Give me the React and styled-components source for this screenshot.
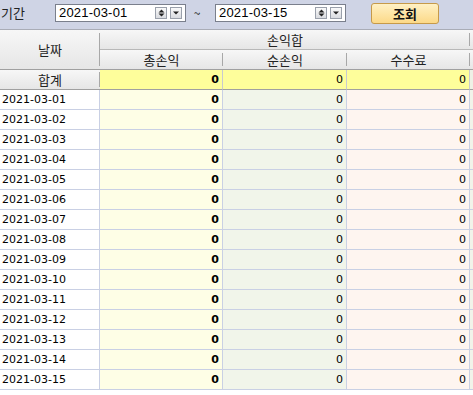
import React from 'react';
import styled, { createGlobalStyle } from 'styled-components';

const GlobalStyle = createGlobalStyle`
  html, body { margin: 0; padding: 0; background: #fff; }
  body { font-family: "Noto Sans CJK KR", "DejaVu Sans", sans-serif; }
`;

const Page = styled.div`
  width: 473px;
  height: 395px;
  overflow: hidden;
  background: #fff;
`;

const Toolbar = styled.div`
  height: 29px;
  display: flex;
  align-items: center;
  background: #cfd4e5;
  border-bottom: 1px solid #a9acb6;
  box-sizing: content-box;
`;

const Label = styled.span`
  font-size: 13px;
  color: #222;
  margin-left: 1px;
  width: 54px;
  line-height: 1;
  margin-top: -4px;
`;

const DateBox = styled.div`
  width: 131px;
  height: 18px;
  box-sizing: border-box;
  border: 1px solid #7a7f8c;
  background: #fff;
  display: flex;
  align-items: center;
  padding: 0 3px;
  margin-top: -4px;
`;

const DateText = styled.span`
  font-family: "Liberation Sans", Arial, sans-serif;
  font-size: 13px;
  color: #000;
  flex: 1;
  letter-spacing: 0.2px;
`;

const SmallBtn = styled.span`
  width: 12px;
  height: 12px;
  box-sizing: border-box;
  border: 1px solid #9aa0ab;
  background: linear-gradient(#fafafa, #d9dbe0);
  margin-left: ${p => p.$gap || 0}px;
  display: flex;
  align-items: center;
  justify-content: center;
`;

const Tilde = styled.span`
  font-size: 12px;
  width: 29px;
  padding-right: 7px;
  box-sizing: border-box;
  text-align: center;
  color: #222;
  margin-top: -4px;
`;

const SearchButton = styled.button`
  margin-left: 25px;
  width: 68px;
  height: 21px;
  border: 1px solid #c69a4a;
  border-radius: 3px;
  background: linear-gradient(#fff1c4, #fcd988);
  font-family: "Noto Sans CJK KR", sans-serif;
  font-weight: 700;
  font-size: 13px;
  color: #111;
  padding: 0;
  line-height: 1;
  margin-top: -3px;
`;

const Grid = styled.div`
  display: grid;
  grid-template-columns: 100px 123px 124px 123px 1fr;
  grid-auto-rows: 20px;
  background: #f1f4ea;
`;

const HeadCell = styled.div`
  grid-column: ${p => p.$col || 'auto'};
  grid-row: ${p => p.$row || 'auto'};
  background: linear-gradient(#f7f7f7, #e6e6e6);
  border-bottom: 1px solid ${p => (p.$last ? '#a0a0a0' : '#b8b8b8')};
  display: flex;
  align-items: center;
  justify-content: center;
  position: relative;
  font-size: 13px;
  color: #222;
  box-sizing: border-box;
  &::after {
    content: '';
    position: absolute;
    right: 0;
    top: 3px;
    bottom: 3px;
    width: 1px;
    background: #a8a8a8;
  }
`;

const Filler = styled.div`
  background: linear-gradient(#f7f7f7, #e6e6e6);
  border-bottom: 1px solid ${p => (p.$last ? '#a0a0a0' : '#b8b8b8')};
  box-sizing: border-box;
`;

const SumLabel = styled.div`
  background: linear-gradient(#f7f7f7, #e6e6e6);
  border-bottom: 1px solid #a0a0a0;
  display: flex;
  align-items: center;
  justify-content: center;
  font-size: 13px;
  color: #222;
  position: relative;
  box-sizing: border-box;
  &::after {
    content: '';
    position: absolute;
    right: 0;
    top: 2px;
    bottom: 2px;
    width: 1px;
    background: #a8a8a8;
  }
`;

const SumCell = styled.div`
  background: #fefe9b;
  border-bottom: 1px solid #a0a0a0;
  border-right: 1px solid #c8cad0;
  box-sizing: border-box;
  display: flex;
  align-items: center;
  justify-content: flex-end;
  padding-right: 3px;
  font-family: "DejaVu Sans", Tahoma, sans-serif;
  font-size: 11px;
  font-weight: ${p => (p.$bold ? 700 : 400)};
  color: #000;
`;

const SumRest = styled.div`
  background: #eef1e6;
  border-bottom: 1px solid #a0a0a0;
  box-sizing: border-box;
`;

const tints = { total: '#fefee6', net: '#f1f5ea', fee: '#fef5f0' };

const Cell = styled.div`
  background: ${p => tints[p.$tint] || '#fff'};
  border-bottom: 1px solid #c9d0e4;
  border-right: 1px solid #c9d0e4;
  box-sizing: border-box;
  display: flex;
  align-items: center;
  justify-content: ${p => (p.$left ? 'flex-start' : 'flex-end')};
  padding: 0 3px 0 2px;
  font-family: "DejaVu Sans", Tahoma, sans-serif;
  font-size: 11px;
  font-weight: ${p => (p.$bold ? 700 : 400)};
  color: #000;
`;

const Rest = styled.div`
  background: #f1f4ea;
  border-bottom: 1px solid #c9d0e4;
  box-sizing: border-box;
`;

const Spin = () => (
  <SmallBtn $gap={0}>
    <svg width="7" height="8" viewBox="0 0 7 8">
      <path d="M3.5 0.5 L6.5 3.5 L0.5 3.5 Z M0.5 4.5 L6.5 4.5 L3.5 7.5 Z" fill="#222" />
    </svg>
  </SmallBtn>
);

const Drop = () => (
  <SmallBtn $gap={3}>
    <svg width="6" height="4" viewBox="0 0 6 4">
      <path d="M0 0.5 L6 0.5 L3 3.5 Z" fill="#222" />
    </svg>
  </SmallBtn>
);

const DateInput = ({ value }) => (
  <DateBox>
    <DateText>{value}</DateText>
    <Spin />
    <Drop />
  </DateBox>
);

const days = Array.from({ length: 15 }, (_, i) => `2021-03-${String(i + 1).padStart(2, '0')}`);

export default function App() {
  return (
    <Page>
      <GlobalStyle />
      <Toolbar>
        <Label>기간</Label>
        <DateInput value="2021-03-01" />
        <Tilde>~</Tilde>
        <DateInput value="2021-03-15" />
        <SearchButton>조회</SearchButton>
      </Toolbar>
      <Grid>
        <HeadCell $col="1" $row="1 / span 2" $last>날짜</HeadCell>
        <HeadCell $col="2 / span 3" $row="1">손익합</HeadCell>
        <Filler />
        <HeadCell $col="2" $row="2" $last>총손익</HeadCell>
        <HeadCell $col="3" $row="2" $last>순손익</HeadCell>
        <HeadCell $col="4" $row="2" $last>수수료</HeadCell>
        <Filler $last />

        <SumLabel>합계</SumLabel>
        <SumCell $bold>0</SumCell>
        <SumCell>0</SumCell>
        <SumCell>0</SumCell>
        <SumRest />

        {days.map(d => (
          <React.Fragment key={d}>
            <Cell $left>{d}</Cell>
            <Cell $tint="total" $bold>0</Cell>
            <Cell $tint="net">0</Cell>
            <Cell $tint="fee">0</Cell>
            <Rest />
          </React.Fragment>
        ))}
      </Grid>
    </Page>
  );
}
